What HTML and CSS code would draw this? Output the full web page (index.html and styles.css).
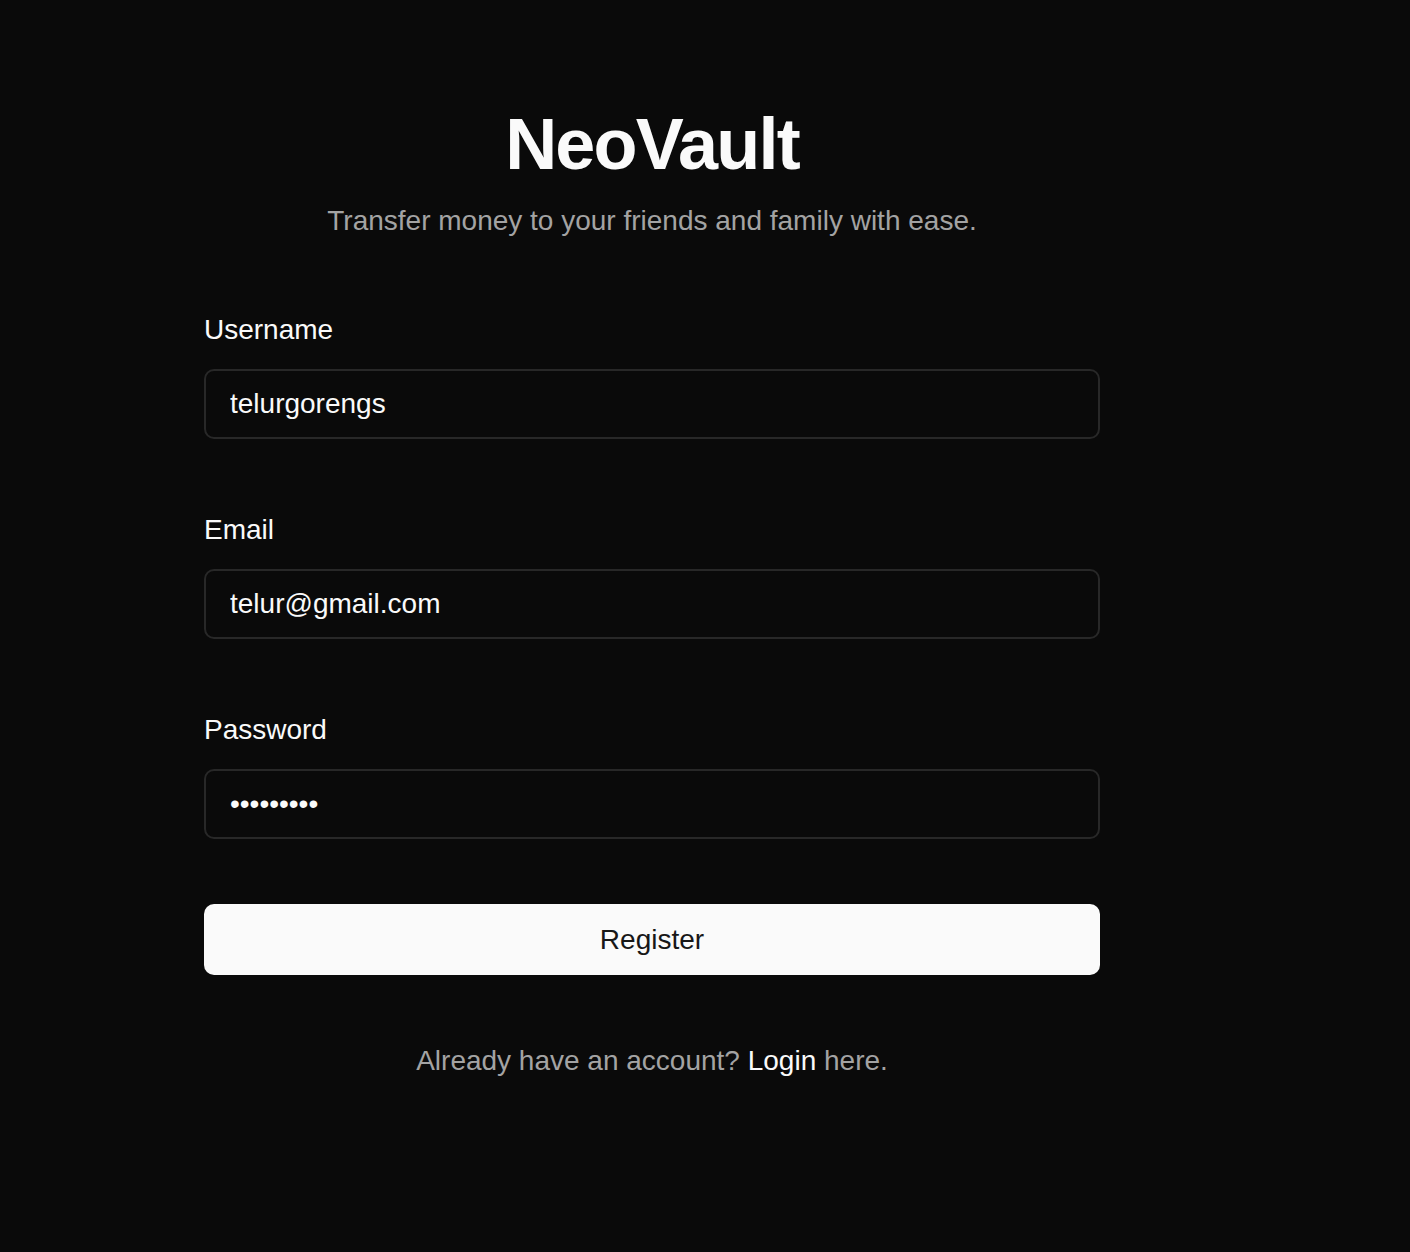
FILE: index.html
```html
<!DOCTYPE html>
<html lang="en">
<head>
<meta charset="utf-8">
<title>NeoVault — Register</title>
<link rel="stylesheet" href="styles.css">
</head>
<body>
<main class="page">
  <header class="header">
    <h1 class="title">NeoVault</h1>
    <p class="subtitle">Transfer money to your friends and family with ease.</p>
  </header>
  <form class="form">
    <div class="field">
      <label class="label" for="username">Username</label>
      <input class="input" id="username" type="text" value="telurgorengs">
    </div>
    <div class="field">
      <label class="label" for="email">Email</label>
      <input class="input" id="email" type="email" value="telur@gmail.com">
    </div>
    <div class="field">
      <label class="label" for="password">Password</label>
      <input class="input" id="password" type="password" value="123456789">
    </div>
    <button class="button" type="button">Register</button>
  </form>
  <p class="footer">Already have an account? <a class="link" href="#">Login</a> here.</p>
</main>
</body>
</html>
```
FILE: styles.css
```css
html, body {
  margin: 0;
  padding: 0;
  background: #0a0a0a;
  height: 100%;
}

body {
  font-family: "Liberation Sans", Arial, Helvetica, sans-serif;
  color: #fafafa;
}

.page {
  width: 896px;
  margin-left: 204px;
  padding-top: 104px;
}

.header {
  display: flex;
  flex-direction: column;
  align-items: center;
}

.title {
  margin: 0;
  font-size: 72px;
  line-height: 80px;
  font-weight: 700;
  letter-spacing: -1.8px;
  color: #fafafa;
}

.subtitle {
  margin: 17px 0 0;
  font-size: 28px;
  line-height: 40px;
  color: #a3a3a3;
}

.form {
  display: flex;
  flex-direction: column;
  gap: 70px;
  margin-top: 68px;
}

.field {
  display: flex;
  flex-direction: column;
  gap: 18px;
}

.label {
  font-size: 28px;
  line-height: 42px;
  color: #fafafa;
}

.input {
  box-sizing: border-box;
  height: 70px;
  width: 100%;
  margin: 0;
  padding: 0 24px;
  border: 2px solid #282828;
  border-radius: 10px;
  background: #0a0a0a;
  color: #fafafa;
  font-family: "Liberation Sans", Arial, Helvetica, sans-serif;
  font-size: 28px;
  outline: none;
}

.button {
  box-sizing: border-box;
  height: 71px;
  width: 100%;
  margin-top: -5px;
  border: none;
  border-radius: 10px;
  background: #fafafa;
  color: #171717;
  font-family: "Liberation Sans", Arial, Helvetica, sans-serif;
  font-size: 28px;
  cursor: pointer;
}

.footer {
  margin: 66px 0 0;
  text-align: center;
  font-size: 28px;
  line-height: 40px;
  color: #a3a3a3;
}

.link {
  color: #fafafa;
  text-decoration: none;
}
```
